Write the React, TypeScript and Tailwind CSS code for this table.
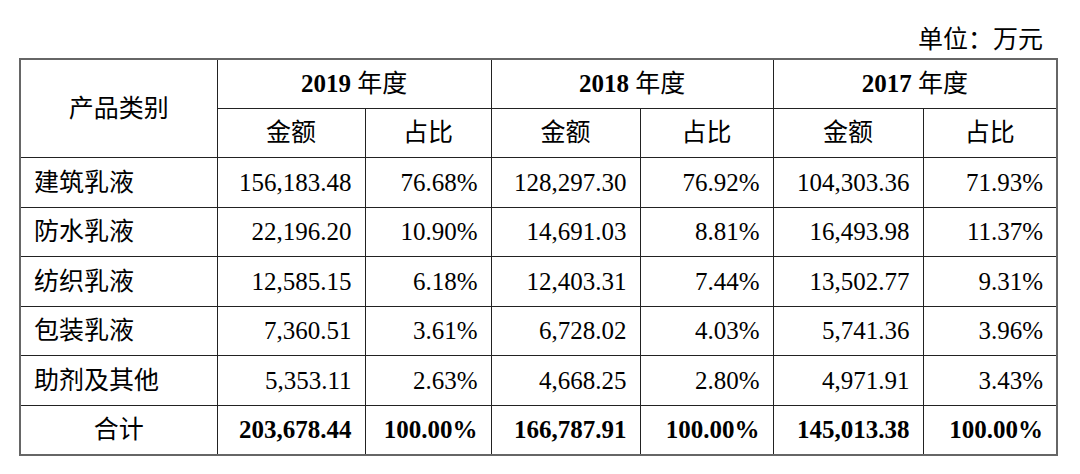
import { Fragment } from "react";

const rows = [
  ["建筑乳液", "156,183.48", "76.68%", "128,297.30", "76.92%", "104,303.36", "71.93%"],
  ["防水乳液", "22,196.20", "10.90%", "14,691.03", "8.81%", "16,493.98", "11.37%"],
  ["纺织乳液", "12,585.15", "6.18%", "12,403.31", "7.44%", "13,502.77", "9.31%"],
  ["包装乳液", "7,360.51", "3.61%", "6,728.02", "4.03%", "5,741.36", "3.96%"],
  ["助剂及其他", "5,353.11", "2.63%", "4,668.25", "2.80%", "4,971.91", "3.43%"],
];

const rowHeights = ["h-[50px]", "h-[49px]", "h-[50px]", "h-[49px]", "h-[50px]"];

const years = ["2019", "2018", "2017"];

const totals = ["203,678.44", "100.00%", "166,787.91", "100.00%", "145,013.38", "100.00%"];

export default function App() {
  return (
    <div className="w-[1080px] h-[474px] bg-white text-black font-['Liberation_Serif','Noto_Sans_CJK_SC',serif] text-[25px] leading-[25px]">
      {/* unit label */}
      <div className="h-[58px] pt-[27px] pr-[37px] text-right">单位：万元</div>

      <table className="ml-[19px] w-[1037px] table-fixed border-collapse border-2 border-[#666]">
        <colgroup>
          <col className="w-[197px]" />
          <col className="w-[148px]" />
          <col className="w-[126px]" />
          <col className="w-[149px]" />
          <col className="w-[133px]" />
          <col className="w-[150px]" />
          <col className="w-[134px]" />
        </colgroup>
        <thead>
          <tr className="h-[49px]">
            <th rowSpan={2} className="border border-[#222] font-normal text-center">
              产品类别
            </th>
            {years.map((y) => (
              <th key={y} colSpan={2} className="border border-[#222] text-center font-bold">
                {y} <span className="font-normal">年度</span>
              </th>
            ))}
          </tr>
          <tr className="h-[49px]">
            {years.map((y) => (
              <Fragment key={y}>
                <th className="border border-[#222] font-normal text-center">金额</th>
                <th className="border border-[#222] font-normal text-center">占比</th>
              </Fragment>
            ))}
          </tr>
        </thead>
        <tbody>
          {rows.map((r, i) => (
            <tr key={r[0]} className={rowHeights[i]}>
              <td className="border border-[#222] pl-[13px] text-left">{r[0]}</td>
              {r.slice(1).map((v, j) => (
                <td key={j} className="border border-[#222] pr-[13px] text-right">
                  {v}
                </td>
              ))}
            </tr>
          ))}
          <tr className="h-[50px] font-bold">
            <td className="border border-[#222] text-center font-normal">合计</td>
            {totals.map((v, j) => (
              <td key={j} className="border border-[#222] pr-[13px] text-right">
                {v}
              </td>
            ))}
          </tr>
        </tbody>
      </table>
    </div>
  );
}
